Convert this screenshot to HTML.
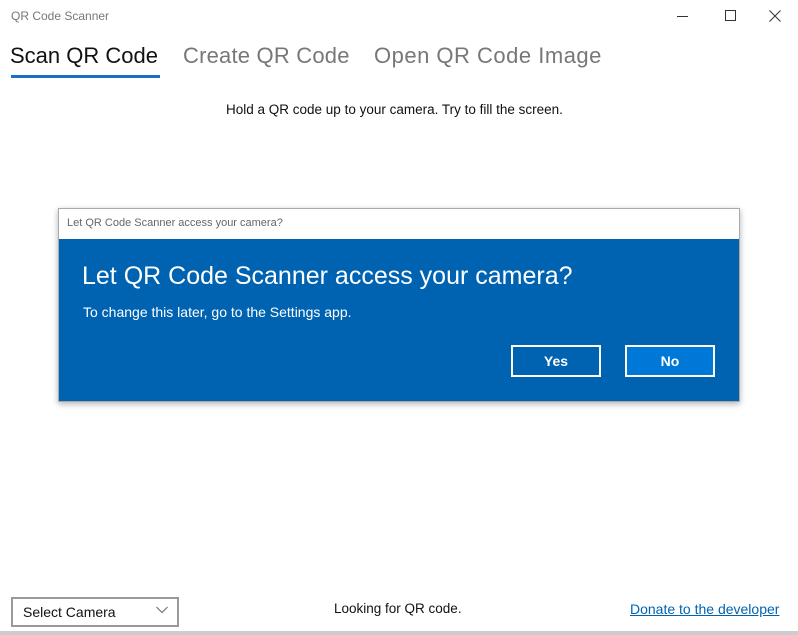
<!DOCTYPE html>
<html><head><style>
*{margin:0;padding:0;box-sizing:border-box}
body{width:798px;height:635px;background:#fff;font-family:"Liberation Sans",sans-serif;position:relative;overflow:hidden}
.a{position:absolute;white-space:nowrap}
</style></head><body>
<div class="a" style="left:11px;top:9px;font-size:12px;color:#777">QR Code Scanner</div>
<div class="a" style="left:677px;top:16px;width:11px;height:1px;background:#333"></div>
<div class="a" style="left:725px;top:10px;width:11px;height:11px;border:1px solid #333"></div>
<svg class="a" style="left:769px;top:10px" width="12" height="12"><path d="M0.5 0.5L11.5 11.5M11.5 0.5L0.5 11.5" stroke="#333"/></svg>
<div class="a" style="left:10px;top:43px;font-size:22px;color:#111">Scan QR Code</div>
<div class="a" style="left:11px;top:75px;width:149px;height:3px;background:#1a6fc0"></div>
<div class="a" style="left:183px;top:43px;font-size:22px;color:#777;letter-spacing:0.2px">Create QR Code</div>
<div class="a" style="left:374px;top:43px;font-size:22px;color:#777;letter-spacing:0.5px">Open QR Code Image</div>
<div class="a" style="left:226px;top:102px;font-size:13.5px;color:#111">Hold a QR code up to your camera. Try to fill the screen.</div>
<div class="a" style="left:58px;top:208px;width:682px;height:194px;border:1px solid #aaa;box-shadow:0 2px 6px rgba(0,0,0,.3);background:#0063b1">
 <div style="height:30px;background:#fff;font-size:11px;color:#666;padding:8px 0 0 8px">Let QR Code Scanner access your camera?</div>
 <div class="a" style="left:23px;top:53px;font-size:25px;color:#fff">Let QR Code Scanner access your camera?</div>
 <div class="a" style="left:24px;top:95px;font-size:14px;color:#fff">To change this later, go to the Settings app.</div>
 <div class="a" style="left:452px;top:136px;width:90px;height:32px;border:2px solid #fff;color:#fff;font-size:14px;font-weight:bold;text-align:center;line-height:28px">Yes</div>
 <div class="a" style="left:566px;top:136px;width:90px;height:32px;border:2px solid #fff;background:#0078d7;color:#fff;font-size:14px;font-weight:bold;text-align:center;line-height:28px">No</div>
</div>
<div class="a" style="left:11px;top:597px;width:168px;height:30px;border:2px solid #999;font-size:14px;color:#111;padding:5px 0 0 10px">Select Camera</div>
<svg class="a" style="left:156px;top:606px" width="12" height="8"><path d="M0.5 1L6 6.5L11.5 1" stroke="#666" fill="none"/></svg>
<div class="a" style="left:334px;top:601px;font-size:13.5px;color:#111">Looking for QR code.</div>
<div class="a" style="left:630px;top:601px;font-size:14px;color:#0063b1;text-decoration:underline">Donate to the developer</div>
<div class="a" style="left:0;top:631px;width:798px;height:4px;background:#ccc"></div>
</body></html>
